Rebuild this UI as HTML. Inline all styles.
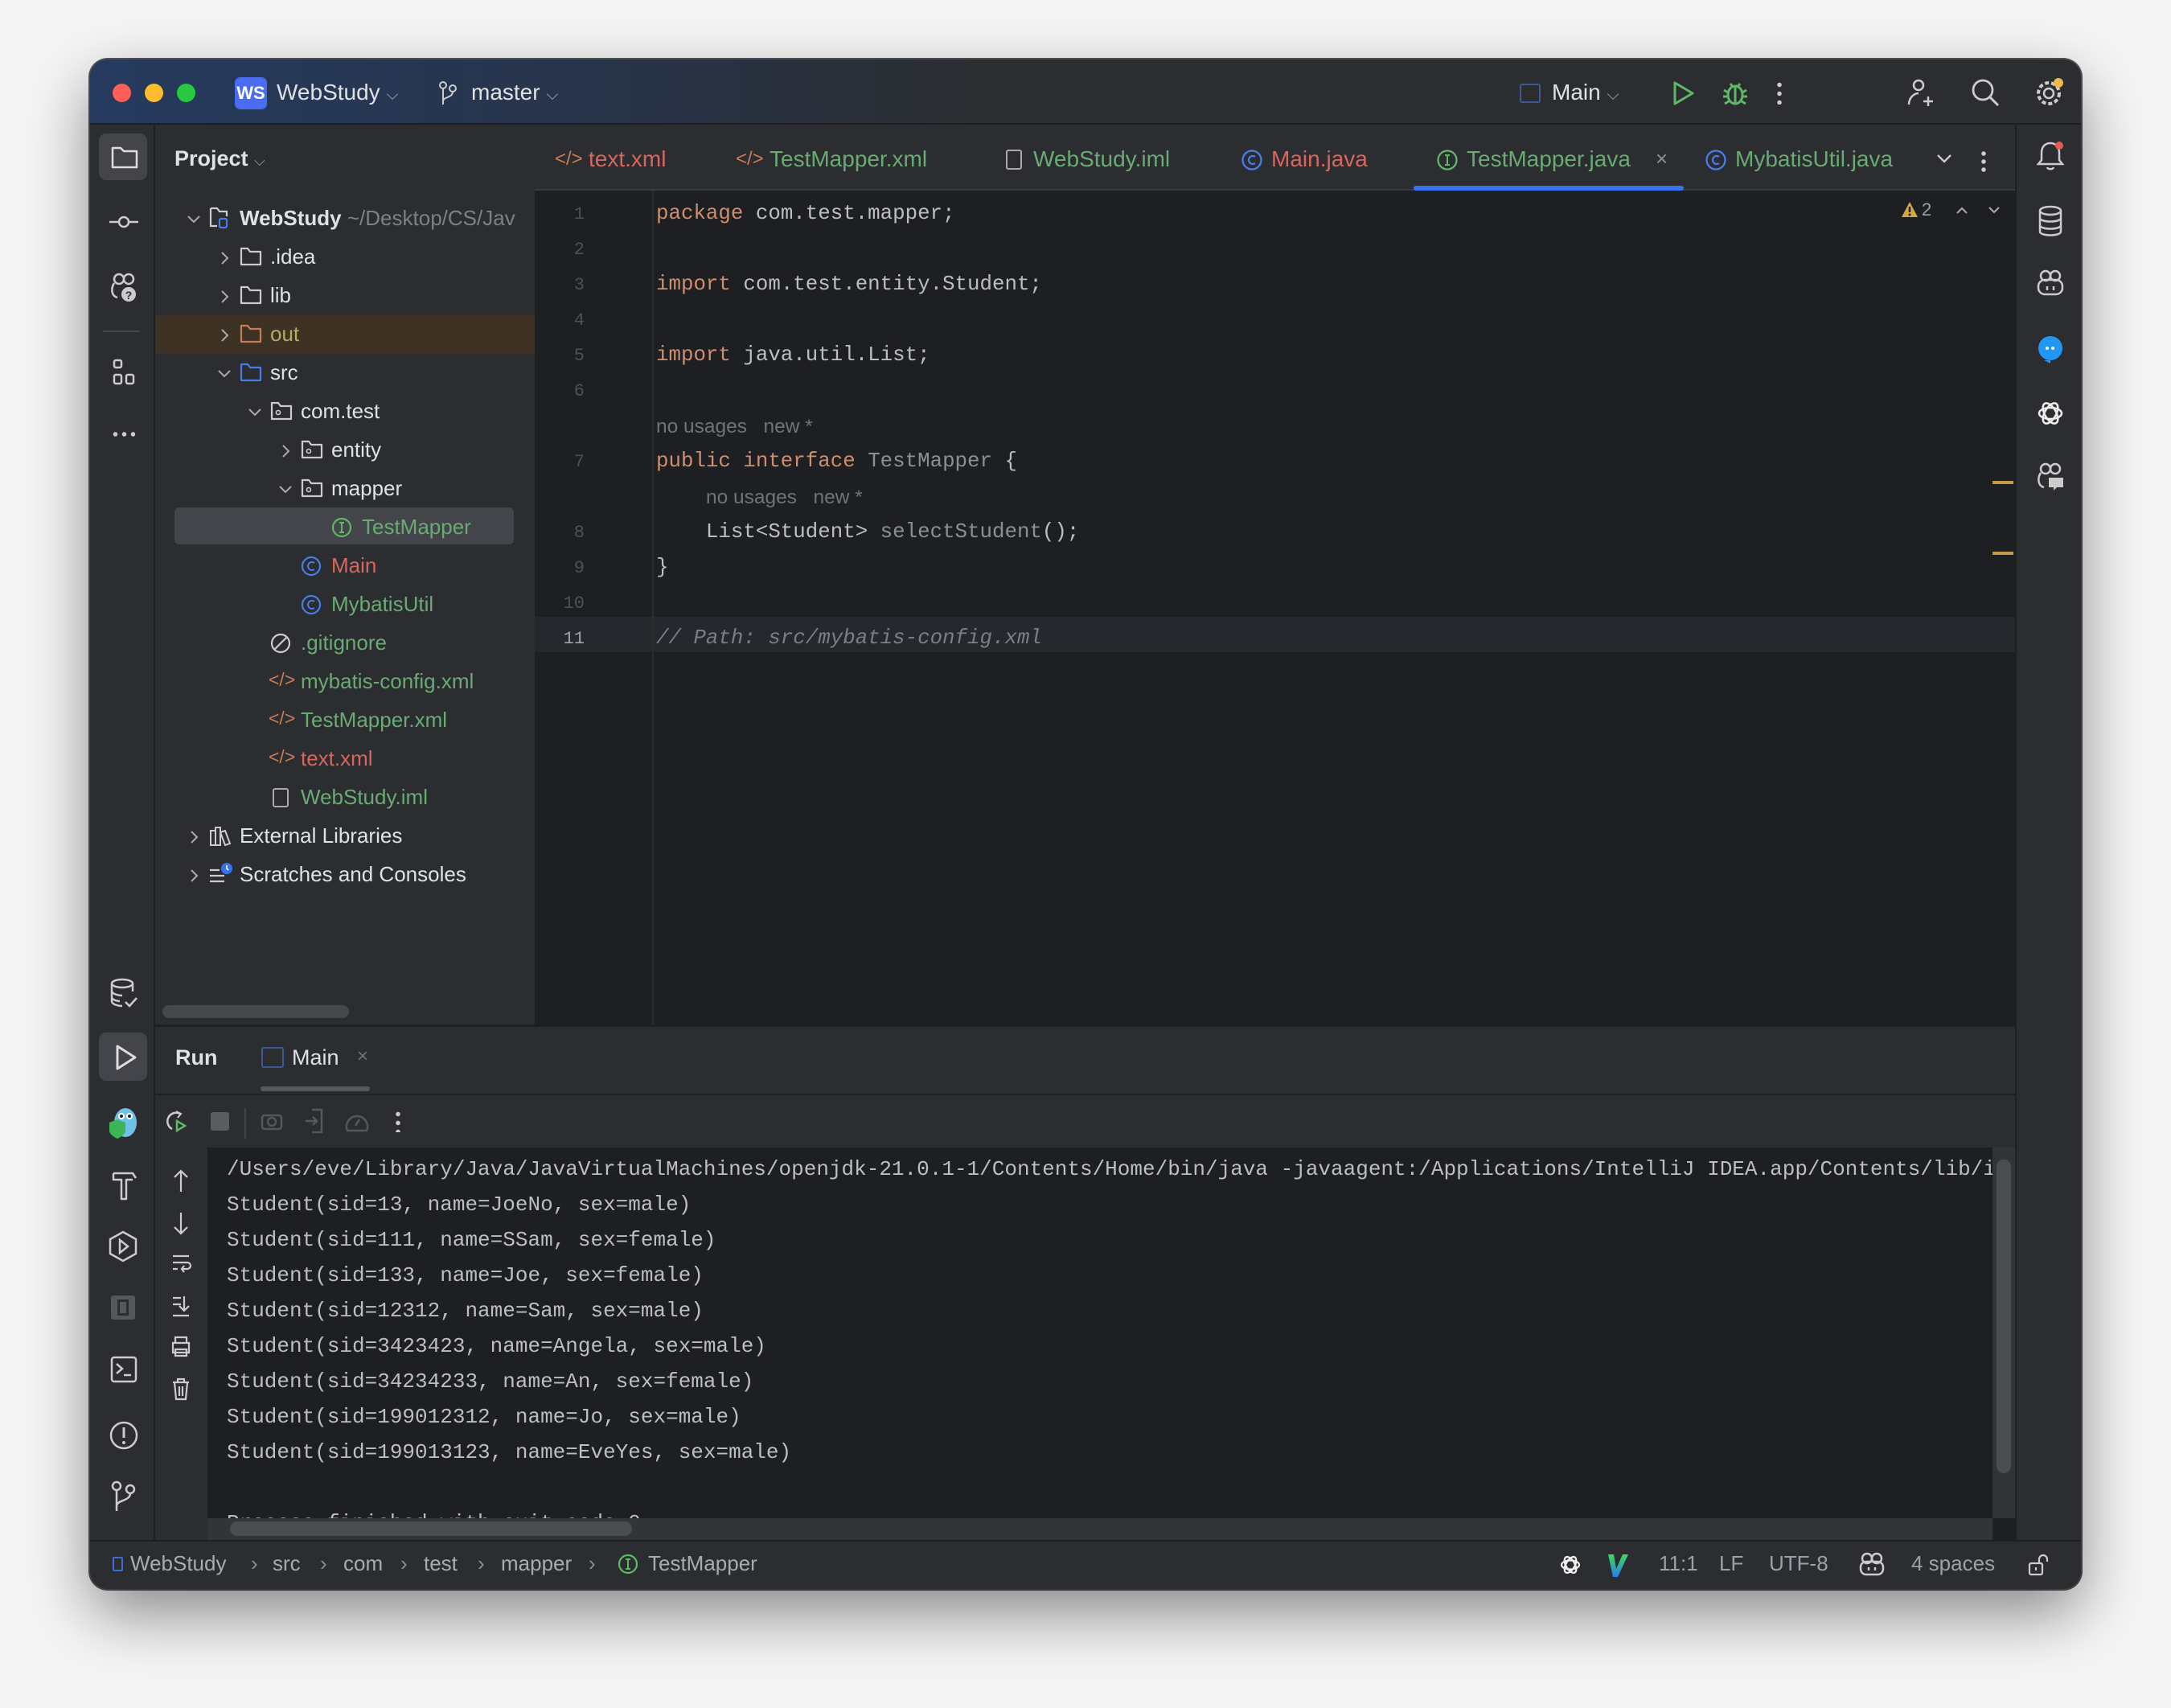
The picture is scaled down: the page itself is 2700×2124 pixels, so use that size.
<!DOCTYPE html>
<html><head><meta charset="utf-8"><style>
*{margin:0;padding:0;box-sizing:border-box}
body{width:2700px;height:2124px;background:#f5f5f5;position:relative;overflow:hidden;font-family:"Liberation Sans",sans-serif}
.abs{position:absolute}
#win{position:absolute;left:112px;top:74px;width:2476px;height:1902px;border-radius:22px;background:#2b2d30;overflow:hidden;box-shadow:0 30px 80px rgba(0,0,0,.45),0 0 0 2px #555;}
.t{position:absolute;white-space:nowrap;font-size:26px;color:#dfe1e5}
.m{font-family:"Liberation Mono",monospace;font-size:25.8px;color:#bcbec4;position:absolute;white-space:pre}
.kw{color:#cf8e6d}.gr{color:#8c8f94}
.ln{position:absolute;font-family:"Liberation Mono",monospace;font-size:22px;color:#4b5059;width:60px;text-align:right}
.hint{position:absolute;font-size:24.5px;color:#6f737a;white-space:nowrap}
.red{color:#d9665e}.green{color:#6aab73}.yel{color:#b3ae60}
svg{position:absolute;overflow:visible}
</style></head><body>
<div id="win">
 <div class="abs" style="left:0;top:0;width:2476px;height:81px;background:linear-gradient(90deg,#253a5e 0%,#28344a 25%,#2b2d30 45%);border-bottom:2px solid #1e1f22"></div>
 <div class="abs" style="left:28px;top:30px;width:23px;height:23px;border-radius:50%;background:#fe5f57"></div>
 <div class="abs" style="left:68px;top:30px;width:23px;height:23px;border-radius:50%;background:#febc2e"></div>
 <div class="abs" style="left:108px;top:30px;width:23px;height:23px;border-radius:50%;background:#28c840"></div>
 <div class="abs" style="left:180px;top:22px;width:40px;height:40px;border-radius:7px;background:#4a6cf0;color:#fff;font-size:22px;font-weight:bold;text-align:center;line-height:40px">WS</div>
 <div class="t" style="left:232px;top:25px;font-size:28px">WebStudy <span style="color:#9da0a8;font-size:20px">⌵</span></div>
 <svg style="left:432px;top:26px" width="26" height="32" viewBox="0 0 26 32"><circle cx="7" cy="6" r="4" fill="none" stroke="#ccc" stroke-width="2"/><circle cx="19" cy="10" r="4" fill="none" stroke="#ccc" stroke-width="2"/><path d="M7 10v20M19 14c0 8-12 6-12 12" fill="none" stroke="#ccc" stroke-width="2"/></svg>
 <div class="t" style="left:474px;top:25px;font-size:28px">master <span style="color:#9da0a8;font-size:20px">⌵</span></div>
 <div class="abs" style="left:1778px;top:30px;width:26px;height:24px;border:2.5px solid #3d5a96;border-radius:3px"></div>
 <div class="t" style="left:1818px;top:25px;font-size:28px">Main <span style="color:#9da0a8;font-size:20px">⌵</span></div>
 <svg style="left:1966px;top:26px" width="30" height="32"><path d="M5 3 L27 16 L5 29 Z" fill="none" stroke="#5fb865" stroke-width="3" stroke-linejoin="round"/></svg>
 <svg style="left:2028px;top:24px" width="36" height="36"><ellipse cx="18" cy="20" rx="9" ry="11" fill="none" stroke="#5fb865" stroke-width="3"/><path d="M18 10v20M4 14l5 3M32 14l-5 3M3 22h6M33 22h-6M5 31l5-3M31 31l-5-3M12 6l3 4M24 6l-3 4" stroke="#5fb865" stroke-width="3"/></svg>
 <div class="abs" style="left:2098px;top:26px;width:6px;height:30px;background:radial-gradient(circle,#ccc 2.5px,transparent 3px) 0 0/6px 11px"></div>
 <svg style="left:2258px;top:22px" width="40" height="40"><circle cx="16" cy="10" r="6" fill="none" stroke="#ccc" stroke-width="2.5"/><path d="M4 34c0-8 6-14 12-14M28 24v12M22 30h12" fill="none" stroke="#ccc" stroke-width="2.5"/></svg>
 <svg style="left:2338px;top:22px" width="40" height="40"><circle cx="16" cy="16" r="12" fill="none" stroke="#ccc" stroke-width="2.8"/><path d="M25 25l10 10" stroke="#ccc" stroke-width="3"/></svg>
 <svg style="left:2418px;top:22px" width="40" height="40"><circle cx="18" cy="20" r="6" fill="none" stroke="#ccc" stroke-width="2.5"/><circle cx="18" cy="20" r="13" fill="none" stroke="#ccc" stroke-width="4" stroke-dasharray="5 3"/><circle cx="30" cy="7" r="6" fill="#f0b84a"/></svg>

 <div class="abs" style="left:0;top:81px;width:81px;height:1760px;background:#2b2d30;border-right:2px solid #1e1f22"></div>
 <div class="abs" style="left:11px;top:92px;width:60px;height:58px;border-radius:9px;background:#43454a"></div>
 <svg style="left:26px;top:106px" width="34" height="30"><path d="M2 4h10l4 4h16v20H2z" fill="none" stroke="#ddd" stroke-width="2.5" stroke-linejoin="round"/></svg>
 <svg style="left:24px;top:192px" width="36" height="20"><circle cx="18" cy="10" r="6" fill="none" stroke="#ccc" stroke-width="2.5"/><path d="M0 10h12M24 10h12" stroke="#ccc" stroke-width="2.5"/></svg>
 <svg style="left:24px;top:264px" width="36" height="40"><circle cx="12" cy="9" r="6" fill="none" stroke="#ccc" stroke-width="2.5"/><circle cx="24" cy="9" r="6" fill="none" stroke="#ccc" stroke-width="2.5"/><path d="M6 14c-4 6-4 16 4 18" fill="none" stroke="#ccc" stroke-width="2.5"/><circle cx="24" cy="28" r="9" fill="#ccc"/><text x="24" y="34" font-size="14" text-anchor="middle" font-family="Liberation Sans" font-weight="bold" fill="#2b2d30">?</text></svg>
 <div class="abs" style="left:16px;top:337px;width:46px;height:2px;background:#43454a"></div>
 <svg style="left:28px;top:372px" width="30" height="34"><rect x="2" y="2" width="9" height="9" rx="2" fill="none" stroke="#ccc" stroke-width="2.5"/><rect x="2" y="20" width="9" height="11" rx="2" fill="none" stroke="#ccc" stroke-width="2.5"/><rect x="17" y="20" width="9" height="11" rx="2" fill="none" stroke="#ccc" stroke-width="2.5"/></svg>
 <div class="abs" style="left:26px;top:463px;width:30px;height:6px;background:radial-gradient(circle,#ccc 2.5px,transparent 3px) 0 0/11px 6px"></div>
 <svg style="left:24px;top:1142px" width="36" height="40"><ellipse cx="16" cy="7" rx="13" ry="5" fill="none" stroke="#ccc" stroke-width="2.5"/><path d="M3 7v22c0 4 8 6 13 6M29 7v10M3 16c0 4 8 6 13 6M3 24c0 3 6 5 10 5M20 30l5 5 9-10" fill="none" stroke="#ccc" stroke-width="2.5"/></svg>
 <div class="abs" style="left:11px;top:1210px;width:60px;height:60px;border-radius:9px;background:#43454a"></div>
 <svg style="left:30px;top:1224px" width="30" height="34"><path d="M4 3L26 17 4 31Z" fill="none" stroke="#ddd" stroke-width="3" stroke-linejoin="round"/></svg>
 <svg style="left:22px;top:1300px" width="40" height="44"><ellipse cx="22" cy="22" rx="14" ry="18" fill="#6fc1e8"/><circle cx="17" cy="14" r="4" fill="#fff"/><circle cx="27" cy="14" r="4" fill="#fff"/><circle cx="17" cy="14" r="2" fill="#222"/><circle cx="27" cy="14" r="2" fill="#222"/><path d="M2 22l10-4 10 4v10c0 6-10 10-10 10S2 38 2 32z" fill="#3db556"/></svg>
 <svg style="left:26px;top:1380px" width="34" height="40"><path d="M3 5h24l4 6M3 5v8h10v24h6V13h8" fill="none" stroke="#ccc" stroke-width="2.5" stroke-linejoin="round"/></svg>
 <svg style="left:22px;top:1456px" width="38" height="40"><path d="M19 2L35 11v18L19 38 3 29V11z" fill="none" stroke="#ccc" stroke-width="2.5"/><path d="M15 12l10 8-10 8z" fill="none" stroke="#ccc" stroke-width="2.5"/></svg>
 <div class="abs" style="left:26px;top:1537px;width:30px;height:30px;border-radius:3px;background:#55575c"></div>
 <div class="abs" style="left:34px;top:1542px;width:14px;height:20px;border:3px solid #2b2d30"></div>
 <svg style="left:25px;top:1612px" width="34" height="34"><rect x="2" y="2" width="30" height="30" rx="3" fill="none" stroke="#ccc" stroke-width="2.5"/><path d="M8 10l7 6-7 6M17 24h9" fill="none" stroke="#ccc" stroke-width="2.5"/></svg>
 <svg style="left:23px;top:1692px" width="38" height="38"><circle cx="19" cy="19" r="16" fill="none" stroke="#ccc" stroke-width="2.5"/><path d="M19 9v13" stroke="#ccc" stroke-width="3"/><circle cx="19" cy="28" r="2" fill="#ccc"/></svg>
 <svg style="left:26px;top:1766px" width="32" height="42"><circle cx="7" cy="8" r="5" fill="none" stroke="#ccc" stroke-width="2.5"/><circle cx="24" cy="12" r="5" fill="none" stroke="#ccc" stroke-width="2.5"/><path d="M7 13v26M24 17c0 10-17 8-17 16" fill="none" stroke="#ccc" stroke-width="2.5"/></svg>

 <div class="abs" style="left:81px;top:81px;width:472px;height:1119px;background:#2b2d30"></div>
 <div class="t" style="left:105px;top:108px;font-weight:bold;font-size:27px">Project <span style="color:#9da0a8;font-size:18px;font-weight:normal">⌵</span></div>
 <div class="abs" style="left:81px;top:318px;width:472px;height:48px;background:#3d3223"></div>
 <div class="abs" style="left:105px;top:557px;width:422px;height:46px;border-radius:6px;background:#43454a"></div>
 <div class="abs" style="left:90px;top:1176px;width:232px;height:16px;border-radius:8px;background:#46484c"></div>

 <div class="abs" style="left:553px;top:81px;width:1843px;height:1119px;background:#1e1f22"></div>
 <div class="abs" style="left:553px;top:81px;width:1843px;height:82px;background:#2b2d30;border-bottom:2px solid #393b40"></div>
 <div class="abs" style="left:1646px;top:157px;width:336px;height:6px;border-radius:3px;background:#3574f0"></div>
 <div class="abs" style="left:553px;top:693px;width:1843px;height:44px;background:#26282e"></div>
 <div class="abs" style="left:699px;top:163px;width:2px;height:1037px;background:#2b2d30"></div>

 <div class="abs" style="left:2366px;top:524px;width:26px;height:4px;background:#c49a4a"></div>
 <div class="abs" style="left:2366px;top:612px;width:26px;height:4px;background:#c49a4a"></div>
 <svg style="left:2252px;top:176px" width="22" height="22"><path d="M11 1L21 20H1Z" fill="#d5a747"/><path d="M11 7v7" stroke="#1e1f22" stroke-width="2.5"/><circle cx="11" cy="17" r="1.5" fill="#1e1f22"/></svg>
 <div class="t" style="left:2278px;top:174px;font-size:22px;color:#9da0a8">2</div>
 <svg style="left:2320px;top:182px" width="16" height="10"><path d="M2 9l6-6 6 6" fill="none" stroke="#aaa" stroke-width="2"/></svg>
 <svg style="left:2360px;top:182px" width="16" height="10"><path d="M2 2l6 6 6-6" fill="none" stroke="#aaa" stroke-width="2"/></svg>

 <div class="abs" style="left:81px;top:1200px;width:2315px;height:3px;background:#1e1f22"></div>
 <div class="abs" style="left:81px;top:1203px;width:2315px;height:150px;background:#2b2d30"></div>
 <div class="t" style="left:106px;top:1226px;font-weight:bold;font-size:27px">Run</div>
 <div class="abs" style="left:213px;top:1228px;width:28px;height:26px;border:2.5px solid #3d5a96;border-radius:3px"></div>
 <div class="t" style="left:251px;top:1226px;font-size:27px">Main</div>
 <div class="t" style="left:332px;top:1226px;font-size:24px;color:#6f737a">×</div>
 <div class="abs" style="left:212px;top:1277px;width:136px;height:6px;border-radius:3px;background:#55575c"></div>
 <div class="abs" style="left:81px;top:1286px;width:2315px;height:2px;background:#1e1f22"></div>
 <svg style="left:94px;top:1306px" width="26" height="28"><path d="M18 5A10 10 0 1 0 8 24" fill="none" stroke="#ccc" stroke-width="2.5"/><path d="M13 2l6 3-4 5" fill="none" stroke="#ccc" stroke-width="2"/><path d="M14 14l10 6-10 6z" fill="none" stroke="#5fb865" stroke-width="2.5"/></svg>
 <div class="abs" style="left:150px;top:1309px;width:23px;height:23px;border-radius:3px;background:#5a5c60"></div>
 <div class="abs" style="left:192px;top:1304px;width:2px;height:38px;background:#43454a"></div>
 <svg style="left:212px;top:1308px" width="28" height="24"><rect x="2" y="5" width="24" height="17" rx="3" fill="none" stroke="#55575c" stroke-width="2.5"/><circle cx="14" cy="13" r="5" fill="none" stroke="#55575c" stroke-width="2.5"/></svg>
 <svg style="left:266px;top:1304px" width="26" height="32"><path d="M10 2h12v28H10M2 16h14M11 11l5 5-5 5" fill="none" stroke="#55575c" stroke-width="2.5"/></svg>
 <svg style="left:316px;top:1306px" width="32" height="30"><path d="M4 26A13 13 0 1 1 28 26z" fill="none" stroke="#55575c" stroke-width="2.5"/><path d="M14 20l5-8" stroke="#55575c" stroke-width="2.5"/></svg>
 <div class="abs" style="left:380px;top:1306px;width:6px;height:28px;background:radial-gradient(circle,#ccc 2.5px,transparent 3px) 0 0/6px 11px"></div>

 <div class="abs" style="left:146px;top:1353px;width:2250px;height:488px;background:#1e1f22"></div>
 <div class="abs" style="left:83px;top:1353px;width:63px;height:488px;background:#2b2d30"></div>
 <div class="abs" style="left:146px;top:1814px;width:2220px;height:28px;background:#323436"></div>
 <div class="abs" style="left:174px;top:1818px;width:500px;height:18px;border-radius:9px;background:#4b4d50"></div>
 <div class="abs" style="left:2366px;top:1353px;width:28px;height:461px;background:#323436"></div>
 <div class="abs" style="left:2371px;top:1368px;width:18px;height:390px;border-radius:9px;background:#4b4d50"></div>

 <div class="abs" style="left:2394px;top:81px;width:82px;height:1760px;background:#2b2d30;border-left:2px solid #1e1f22"></div>
 <svg style="left:2420px;top:100px" width="36" height="40"><path d="M18 4c-7 0-11 5-11 12v9l-4 5h30l-4-5v-9c0-7-4-12-11-12zM14 34c1 3 7 3 8 0" fill="none" stroke="#ccc" stroke-width="2.5"/><circle cx="29" cy="7" r="5" fill="#e55b55"/></svg>
 <svg style="left:2422px;top:182px" width="32" height="40"><ellipse cx="16" cy="6" rx="13" ry="5" fill="none" stroke="#ccc" stroke-width="2.5"/><path d="M3 6v26c0 6 26 6 26 0V6M3 15c0 6 26 6 26 0M3 24c0 6 26 6 26 0" fill="none" stroke="#ccc" stroke-width="2.5"/></svg>
 <svg style="left:2420px;top:260px" width="36" height="36"><circle cx="12" cy="9" r="6" fill="none" stroke="#ccc" stroke-width="2.5"/><circle cx="24" cy="9" r="6" fill="none" stroke="#ccc" stroke-width="2.5"/><rect x="3" y="14" width="30" height="18" rx="8" fill="none" stroke="#ccc" stroke-width="2.5"/><path d="M14 22v5M22 22v5" stroke="#ccc" stroke-width="2.5"/></svg>
 <svg style="left:2420px;top:342px" width="36" height="36"><path d="M18 2a15 15 0 1 0 0 30h-8l8 4v-4a15 15 0 0 0 0-30z" fill="#2196f3"/><circle cx="14" cy="17" r="2" fill="#fff"/><circle cx="21" cy="17" r="2" fill="#fff"/></svg>
 <svg style="left:2420px;top:422px" width="36" height="36"><g fill="none" stroke="#eee" stroke-width="2.5"><ellipse cx="18" cy="18" rx="14" ry="7"/><ellipse cx="18" cy="18" rx="14" ry="7" transform="rotate(60 18 18)"/><ellipse cx="18" cy="18" rx="14" ry="7" transform="rotate(120 18 18)"/></g></svg>
 <svg style="left:2420px;top:500px" width="36" height="40"><circle cx="12" cy="9" r="6" fill="none" stroke="#ccc" stroke-width="2.5"/><circle cx="24" cy="9" r="6" fill="none" stroke="#ccc" stroke-width="2.5"/><path d="M6 14c-4 6-4 16 4 18" fill="none" stroke="#ccc" stroke-width="2.5"/><path d="M16 20h18v12h-8l-4 4v-4h-6z" fill="#ccc"/></svg>

 <div class="abs" style="left:0;top:1841px;width:2476px;height:2px;background:#1e1f22"></div>
 <div class="abs" style="left:28px;top:1862px;width:13px;height:18px;border:2.5px solid #3d6bd9;border-radius:2px"></div>
 <div class="t" style="left:50px;top:1855px;color:#a8abb1">WebStudy</div>
 <div class="t" style="left:200px;top:1855px;color:#8c8f94">›</div>
 <div class="t" style="left:227px;top:1855px;color:#a8abb1">src</div>
 <div class="t" style="left:286px;top:1855px;color:#8c8f94">›</div>
 <div class="t" style="left:315px;top:1855px;color:#a8abb1">com</div>
 <div class="t" style="left:386px;top:1855px;color:#8c8f94">›</div>
 <div class="t" style="left:415px;top:1855px;color:#a8abb1">test</div>
 <div class="t" style="left:482px;top:1855px;color:#8c8f94">›</div>
 <div class="t" style="left:511px;top:1855px;color:#a8abb1">mapper</div>
 <div class="t" style="left:620px;top:1855px;color:#8c8f94">›</div>
 <svg style="left:656px;top:1858px" width="26" height="26"><circle cx="13" cy="13" r="11" fill="none" stroke="#5fb865" stroke-width="2.2"/><path d="M13 7v12M10 7h6M10 19h6" stroke="#5fb865" stroke-width="2"/></svg>
 <div class="t" style="left:694px;top:1855px;color:#a8abb1">TestMapper</div>
 <svg style="left:1827px;top:1858px" width="28" height="28"><g fill="none" stroke="#eee" stroke-width="2.3"><ellipse cx="14" cy="14" rx="11" ry="5.5"/><ellipse cx="14" cy="14" rx="11" ry="5.5" transform="rotate(60 14 14)"/><ellipse cx="14" cy="14" rx="11" ry="5.5" transform="rotate(120 14 14)"/></g></svg>
 <svg style="left:1886px;top:1857px" width="28" height="30"><defs><linearGradient id="vg" x1="0" y1="0" x2="0" y2="1"><stop offset="0" stop-color="#3ddc5a"/><stop offset="1" stop-color="#2a7bf0"/></linearGradient></defs><path d="M2 2h7l3 18 8-18h7L14 30H8z" fill="url(#vg)"/></svg>
 <div class="t" style="left:1951px;top:1855px;color:#9da0a8">11:1</div>
 <div class="t" style="left:2026px;top:1855px;color:#9da0a8">LF</div>
 <div class="t" style="left:2088px;top:1855px;color:#9da0a8">UTF-8</div>
 <svg style="left:2200px;top:1856px" width="32" height="30"><circle cx="10" cy="8" r="6" fill="none" stroke="#ccc" stroke-width="2.5"/><circle cx="22" cy="8" r="6" fill="none" stroke="#ccc" stroke-width="2.5"/><rect x="2" y="12" width="28" height="16" rx="7" fill="none" stroke="#ccc" stroke-width="2.5"/><path d="M12 19v4M20 19v4" stroke="#ccc" stroke-width="2.5"/></svg>
 <div class="t" style="left:2265px;top:1855px;color:#9da0a8">4 spaces</div>
 <svg style="left:2410px;top:1858px" width="26" height="28"><rect x="2" y="12" width="16" height="14" rx="2" fill="none" stroke="#ccc" stroke-width="2.2"/><path d="M14 12V7a5 5 0 0 1 10 0v3M10 17v4" fill="none" stroke="#ccc" stroke-width="2.2"/></svg>
</div>
<script>
var W=document.getElementById('win');
function add(h){W.insertAdjacentHTML('beforeend',h);}
var tabs=[[620,'xml','text.xml','red'],[845,'xml','TestMapper.xml','green'],[1173,'iml','WebStudy.iml','green'],[1469,'c','Main.java','red'],[1712,'i','TestMapper.java','green'],[2046,'c','MybatisUtil.java','green']];
tabs.forEach(function(t){
 var x=t[0],ic='';
 if(t[1]=='xml')ic='<div class="t" style="left:'+(x-42)+'px;top:110px;color:#c77d55;font-size:24px">&lt;/&gt;</div>';
 if(t[1]=='iml')ic='<div class="abs" style="left:'+(x-34)+'px;top:112px;width:20px;height:25px;border:2.5px solid #aaa;border-radius:3px"></div>';
 if(t[1]=='c'||t[1]=='i')ic='<svg style="left:'+(x-38)+'px;top:111px" width="28" height="28"><circle cx="14" cy="14" r="11.5" fill="none" stroke="'+(t[1]=='c'?'#4a7ce8':'#5fb865')+'" stroke-width="2.3"/>'+(t[1]=='c'?'<path d="M18 10a5 5 0 1 0 0 8" fill="none" stroke="#4a7ce8" stroke-width="2.2"/>':'<path d="M14 8v12M11 8h6M11 20h6" stroke="#5fb865" stroke-width="2"/>')+'</svg>';
 add(ic+'<div class="t '+t[3]+'" style="left:'+x+'px;top:108px;font-size:28px">'+t[2]+'</div>');
});
add('<div class="t" style="left:1947px;top:108px;font-size:26px;color:#8c8f94">×</div>');
add('<svg style="left:2296px;top:116px" width="20" height="14"><path d="M2 3l8 8 8-8" fill="none" stroke="#ccc" stroke-width="2.3"/></svg>');
add('<div class="abs" style="left:2352px;top:112px;width:6px;height:28px;background:radial-gradient(circle,#ccc 2.5px,transparent 3px) 0 0/6px 10px"></div>');
var rows=[
[0,'v','proj','<b>WebStudy</b> <span style="color:#7d8087">~/Desktop/CS/Jav</span>',''],
[1,'>','f','.idea',''],[1,'>','f','lib',''],[1,'>','fo','out','yel'],[1,'v','fb','src',''],
[2,'v','p','com.test',''],[3,'>','p','entity',''],[3,'v','p','mapper',''],[4,'','i','TestMapper','green'],
[3,'','c','Main','red'],[3,'','c','MybatisUtil','green'],[2,'','ign','.gitignore','green'],[2,'','xml','mybatis-config.xml','green'],
[2,'','xml','TestMapper.xml','green'],[2,'','xml','text.xml','red'],[2,'','iml','WebStudy.iml','green'],
[0,'>','lib','External Libraries',''],[0,'>','scr','Scratches and Consoles','']];
rows.forEach(function(r,i){
 var y=198+i*48, tx=186+r[0]*38, ax=tx-66, ix=tx-38, h='';
 if(r[1]=='>')h+='<svg style="left:'+(ax+4)+'px;top:'+(y-8)+'px" width="12" height="18"><path d="M2 2l7 7-7 7" fill="none" stroke="#aaa" stroke-width="2"/></svg>';
 if(r[1]=='v')h+='<svg style="left:'+ax+'px;top:'+(y-5)+'px" width="18" height="12"><path d="M2 2l7 7 7-7" fill="none" stroke="#aaa" stroke-width="2"/></svg>';
 var c={f:'#ccc',fo:'#c77d55',fb:'#4a7ce8'}[r[2]];
 if(c)h+='<svg style="left:'+ix+'px;top:'+(y-13)+'px" width="28" height="24"><path d="M2 2h8l3 4h13v16H2z" fill="none" stroke="'+c+'" stroke-width="2.2" stroke-linejoin="round"/></svg>';
 if(r[2]=='p')h+='<svg style="left:'+ix+'px;top:'+(y-13)+'px" width="28" height="24"><path d="M2 2h8l3 4h13v16H2z" fill="none" stroke="#ccc" stroke-width="2.2" stroke-linejoin="round"/><circle cx="10" cy="14" r="2.5" fill="none" stroke="#ccc" stroke-width="1.6"/></svg>';
 if(r[2]=='proj')h+='<svg style="left:'+ix+'px;top:'+(y-15)+'px" width="28" height="28"><path d="M2 2h8l3 4h9v6M2 2v22h8" fill="none" stroke="#ccc" stroke-width="2.2"/><rect x="13" y="15" width="9" height="11" rx="2" fill="none" stroke="#4a7ce8" stroke-width="2.2"/></svg>';
 if(r[2]=='c'||r[2]=='i')h+='<svg style="left:'+ix+'px;top:'+(y-13)+'px" width="26" height="26"><circle cx="13" cy="13" r="11" fill="none" stroke="'+(r[2]=='c'?'#4a7ce8':'#5fb865')+'" stroke-width="2.2"/>'+(r[2]=='c'?'<path d="M17 9a5 5 0 1 0 0 8" fill="none" stroke="#4a7ce8" stroke-width="2"/>':'<path d="M13 7v12M10 7h6M10 19h6" stroke="#5fb865" stroke-width="2"/>')+'</svg>';
 if(r[2]=='ign')h+='<svg style="left:'+ix+'px;top:'+(y-13)+'px" width="26" height="26"><circle cx="13" cy="13" r="11" fill="none" stroke="#ccc" stroke-width="2.2"/><path d="M5 21L21 5" stroke="#ccc" stroke-width="2.2"/></svg>';
 if(r[2]=='xml')h+='<div class="t" style="left:'+(ix-2)+'px;top:'+(y-16)+'px;color:#c77d55;font-size:23px">&lt;/&gt;</div>';
 if(r[2]=='iml')h+='<div class="abs" style="left:'+(ix+3)+'px;top:'+(y-12)+'px;width:20px;height:24px;border:2.3px solid #aaa;border-radius:3px"></div>';
 if(r[2]=='lib')h+='<svg style="left:'+ix+'px;top:'+(y-13)+'px" width="28" height="26"><path d="M2 6h6v18H2zM8 2h6v22H8zM14 8l6-2 6 16-6 2z" fill="none" stroke="#ccc" stroke-width="2"/></svg>';
 if(r[2]=='scr')h+='<svg style="left:'+ix+'px;top:'+(y-16)+'px" width="30" height="30"><path d="M1 10h12M1 17h18M1 24h18" stroke="#ccc" stroke-width="2.2"/><circle cx="22" cy="8" r="7" fill="#3574f0"/><path d="M22 4v4l2 2" stroke="#fff" stroke-width="1.6" fill="none"/></svg>';
 h+='<div class="t '+r[4]+'" style="left:'+tx+'px;top:'+(y-16)+'px">'+r[3]+'</div>';
 add(h);
});
var L=[[1,'<span class="kw">package</span> com.test.mapper;'],[2,''],[3,'<span class="kw">import</span> com.test.entity.Student;'],[4,''],[5,'<span class="kw">import</span> java.util.List;'],[6,''],['h','no usages &nbsp; new *',0],[7,'<span class="kw">public interface</span> <span class="gr">TestMapper</span> {'],['h','no usages &nbsp; new *',1],[8,'    List&lt;Student&gt; <span class="gr">selectStudent</span>();'],[9,'}'],[10,''],[11,'<i style="color:#7a7e85">// Path: src/mybatis-config.xml</i>']];
L.forEach(function(l,i){
 var y=177+i*44;
 if(l[0]=='h'){add('<div class="hint" style="left:'+(704+l[2]*62)+'px;top:'+(y+2)+'px">'+l[1]+'</div>');return;}
 add('<div class="ln" style="left:555px;top:'+(y+3)+'px;'+(l[0]==11?'color:#a1a3ab':'')+'">'+l[0]+'</div>');
 add('<div class="m" style="left:704px;top:'+y+'px">'+l[1]+'</div>');
});
var C=['/Users/eve/Library/Java/JavaVirtualMachines/openjdk-21.0.1-1/Contents/Home/bin/java -javaagent:/Applications/IntelliJ IDEA.app/Contents/lib/i',
'Student(sid=13, name=JoeNo, sex=male)','Student(sid=111, name=SSam, sex=female)','Student(sid=133, name=Joe, sex=female)','Student(sid=12312, name=Sam, sex=male)','Student(sid=3423423, name=Angela, sex=male)','Student(sid=34234233, name=An, sex=female)','Student(sid=199012312, name=Jo, sex=male)','Student(sid=199013123, name=EveYes, sex=male)','','Process finished with exit code 0'];
var ch='<div class="abs" style="left:146px;top:1353px;width:2220px;height:461px;overflow:hidden">';
C.forEach(function(s,i){ch+='<div class="m" style="left:24px;top:'+(12+i*44)+'px;font-size:26px">'+s+'</div>';});
add(ch+'</div>');
var ic=['M13 4v26M5 12l8-8 8 8','M13 4v26M5 22l8 8 8-8','M3 6h20M3 14h18a4 4 0 0 1 0 8h-6M3 22h6M17 18l-3 4 3 4','M3 6h10M3 14h10M3 28h20M17 4v18M11 16l6 6 6-6','M6 10V3h14v7M3 10h20v12H3zM6 18h14v8H6z','M3 7h20M9 7V3h8v4M5 7l2 21h12l2-21M11 12v12M15 12v12'];
ic.forEach(function(d,i){add('<svg style="left:100px;top:'+(1378+i*52)+'px" width="26" height="32"><path d="'+d+'" fill="none" stroke="#ccc" stroke-width="2.2"/></svg>');});
</script>
</body></html>
